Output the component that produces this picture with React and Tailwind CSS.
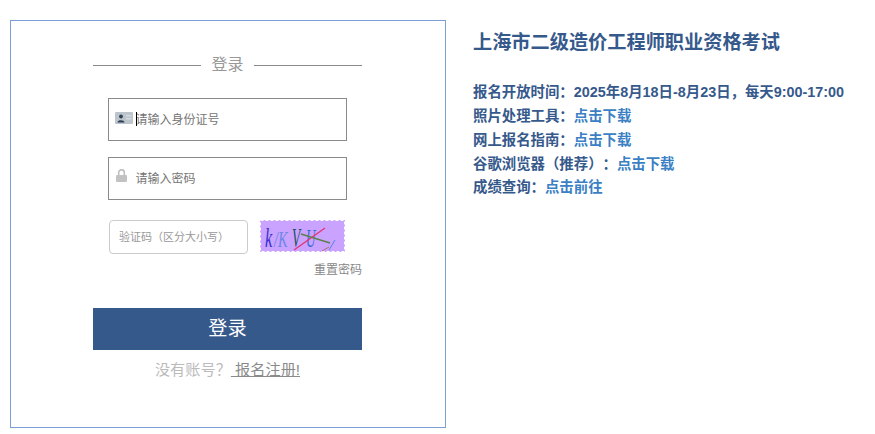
const font = { cjk: 'font-["Liberation_Sans","Noto_Sans_CJK_SC",sans-serif]' };

const IdIcon = () => (
  <svg width="18" height="12" viewBox="0 0 18 12" className="absolute left-[6px] top-[13px]">
    <rect width="18" height="12" rx="1" fill="#bcc5cc" />
    <circle cx="6" cy="4.5" r="1.9" fill="#2e4257" />
    <path d="M2.5 10.5 C2.5 7.5 9.5 7.5 9.5 10.5 Z" fill="#2e4257" />
    <rect x="11" y="3" width="5.5" height="1.5" fill="#d5dbe0" />
    <rect x="11" y="6" width="5.5" height="1.5" fill="#d5dbe0" />
  </svg>
);

const LockIcon = () => (
  <svg width="11" height="13" viewBox="0 0 11 13" className="absolute left-[7px] top-[11px]">
    <path d="M2.7 6 V3.4 a2.8 2.6 0 0 1 5.6 0 V6" fill="none" stroke="#c2c2c2" strokeWidth="1.7" />
    <rect y="6" width="11" height="7" rx="1" fill="#c2c2c2" />
  </svg>
);

const Captcha = () => (
  <svg width="85" height="32" viewBox="0 0 85 32" className="ml-3 shrink-0">
    <rect width="85" height="32" fill="#c9a3ff" />
    <rect x="0.5" y="0.5" width="84" height="31" fill="none" stroke="#fff" strokeDasharray="3 2" />
    <g fontFamily="Liberation Serif" fontStyle="italic">
      <text transform="translate(5 27) scale(0.6 1)" fontSize="27" fill="#3a2fd0">k</text>
      <text transform="translate(14 27) scale(0.6 1)" fontSize="24" fill="#6f86e8">/K</text>
      <text transform="translate(32 27) scale(0.5 1)" fontSize="27" fill="#23505f">V</text>
      <text transform="translate(46 27) scale(0.5 1)" fontSize="26" fill="#3d6ad6">U</text>
    </g>
    <path d="M34 30 L65 8" stroke="#e8306f" strokeWidth="1.2" />
    <path d="M41 14 L70 23" stroke="#5c8048" strokeWidth="1.4" />
    <path d="M69 30 L75 20" stroke="#5a80ee" strokeWidth="1" />
    <path d="M62 31 L69 27" stroke="#b0705f" strokeWidth="1" />
  </svg>
);

const Link = ({ children }) => <a className="text-[#3b7fc4] cursor-pointer">{children}</a>;

const rows = [
  { label: '报名开放时间：', text: '2025年8月18日-8月23日，每天9:00-17:00' },
  { label: '照片处理工具：', link: '点击下载' },
  { label: '网上报名指南：', link: '点击下载' },
  { label: '谷歌浏览器（推荐）：', link: '点击下载' },
  { label: '成绩查询：', link: '点击前往' },
];

const App = () => {
  return (
    <div className={`flex items-start w-[875px] h-[434px] bg-white overflow-hidden pl-[10px] pt-5 [text-spacing-trim:space-all] ${font.cjk}`}>
      <div className="w-[436px] h-[408px] border border-[#7a9fd8] pl-[82px] pt-[34px]">
        <div className="w-[269px]">
          <div className="flex items-center h-5 text-base text-[#999999]">
            <div className="flex-1 h-px bg-[#8a8a8a]" />
            <span className="px-[10.5px]">登录</span>
            <div className="flex-1 h-px bg-[#8a8a8a]" />
          </div>

          <div className="relative ml-[15px] mt-[23px] w-[239px] h-[43px] border border-[#8a8a8a]">
            <IdIcon />
            <span className="absolute left-[27px] top-[13px] w-px h-[14px] bg-black" />
            <input placeholder="请输入身份证号" className="w-full h-full pl-[26.5px] text-[12px] outline-none placeholder:text-[#757575]" />
          </div>
          <div className="relative ml-[15px] mt-4 w-[239px] h-[43px] border border-[#8a8a8a]">
            <LockIcon />
            <input placeholder="请输入密码" className="w-full h-full pl-[26.5px] text-[12px] outline-none placeholder:text-[#757575]" />
          </div>

          <div className="flex items-start ml-4 mt-5">
            <input placeholder="验证码（区分大小写）" className="w-[139px] h-[34px] px-[9px] border border-[#cccccc] rounded text-[11px] outline-none placeholder:text-[#999999]" />
            <Captcha />
          </div>
          <div className="text-right text-[12px] leading-4 text-[#888888] pt-[8px]">重置密码</div>

          <button className="block w-full h-[42px] mt-[30px] bg-[#36598c] text-white text-[19.2px]">登录</button>
          <p className="mt-[10px] text-center text-[15.2px] leading-5 text-[#bbbbbb]">
            没有账号？<a className="underline text-[#8a8a8a] cursor-pointer"> 报名注册!</a>
          </p>
        </div>
      </div>

      <div className="ml-[27px] text-[#36598c] font-bold">
        <h1 className="mt-[10px] text-[19.2px] leading-[26px]">上海市二级造价工程师职业资格考试</h1>
        <div className="mt-[25.2px] text-[14.4px] leading-[23.8px]">
          {rows.map((row) => (
            <div key={row.label}>
              {row.label}
              {row.text}
              {row.link && <Link>{row.link}</Link>}
            </div>
          ))}
        </div>
      </div>
    </div>
  );
};

export default App;
